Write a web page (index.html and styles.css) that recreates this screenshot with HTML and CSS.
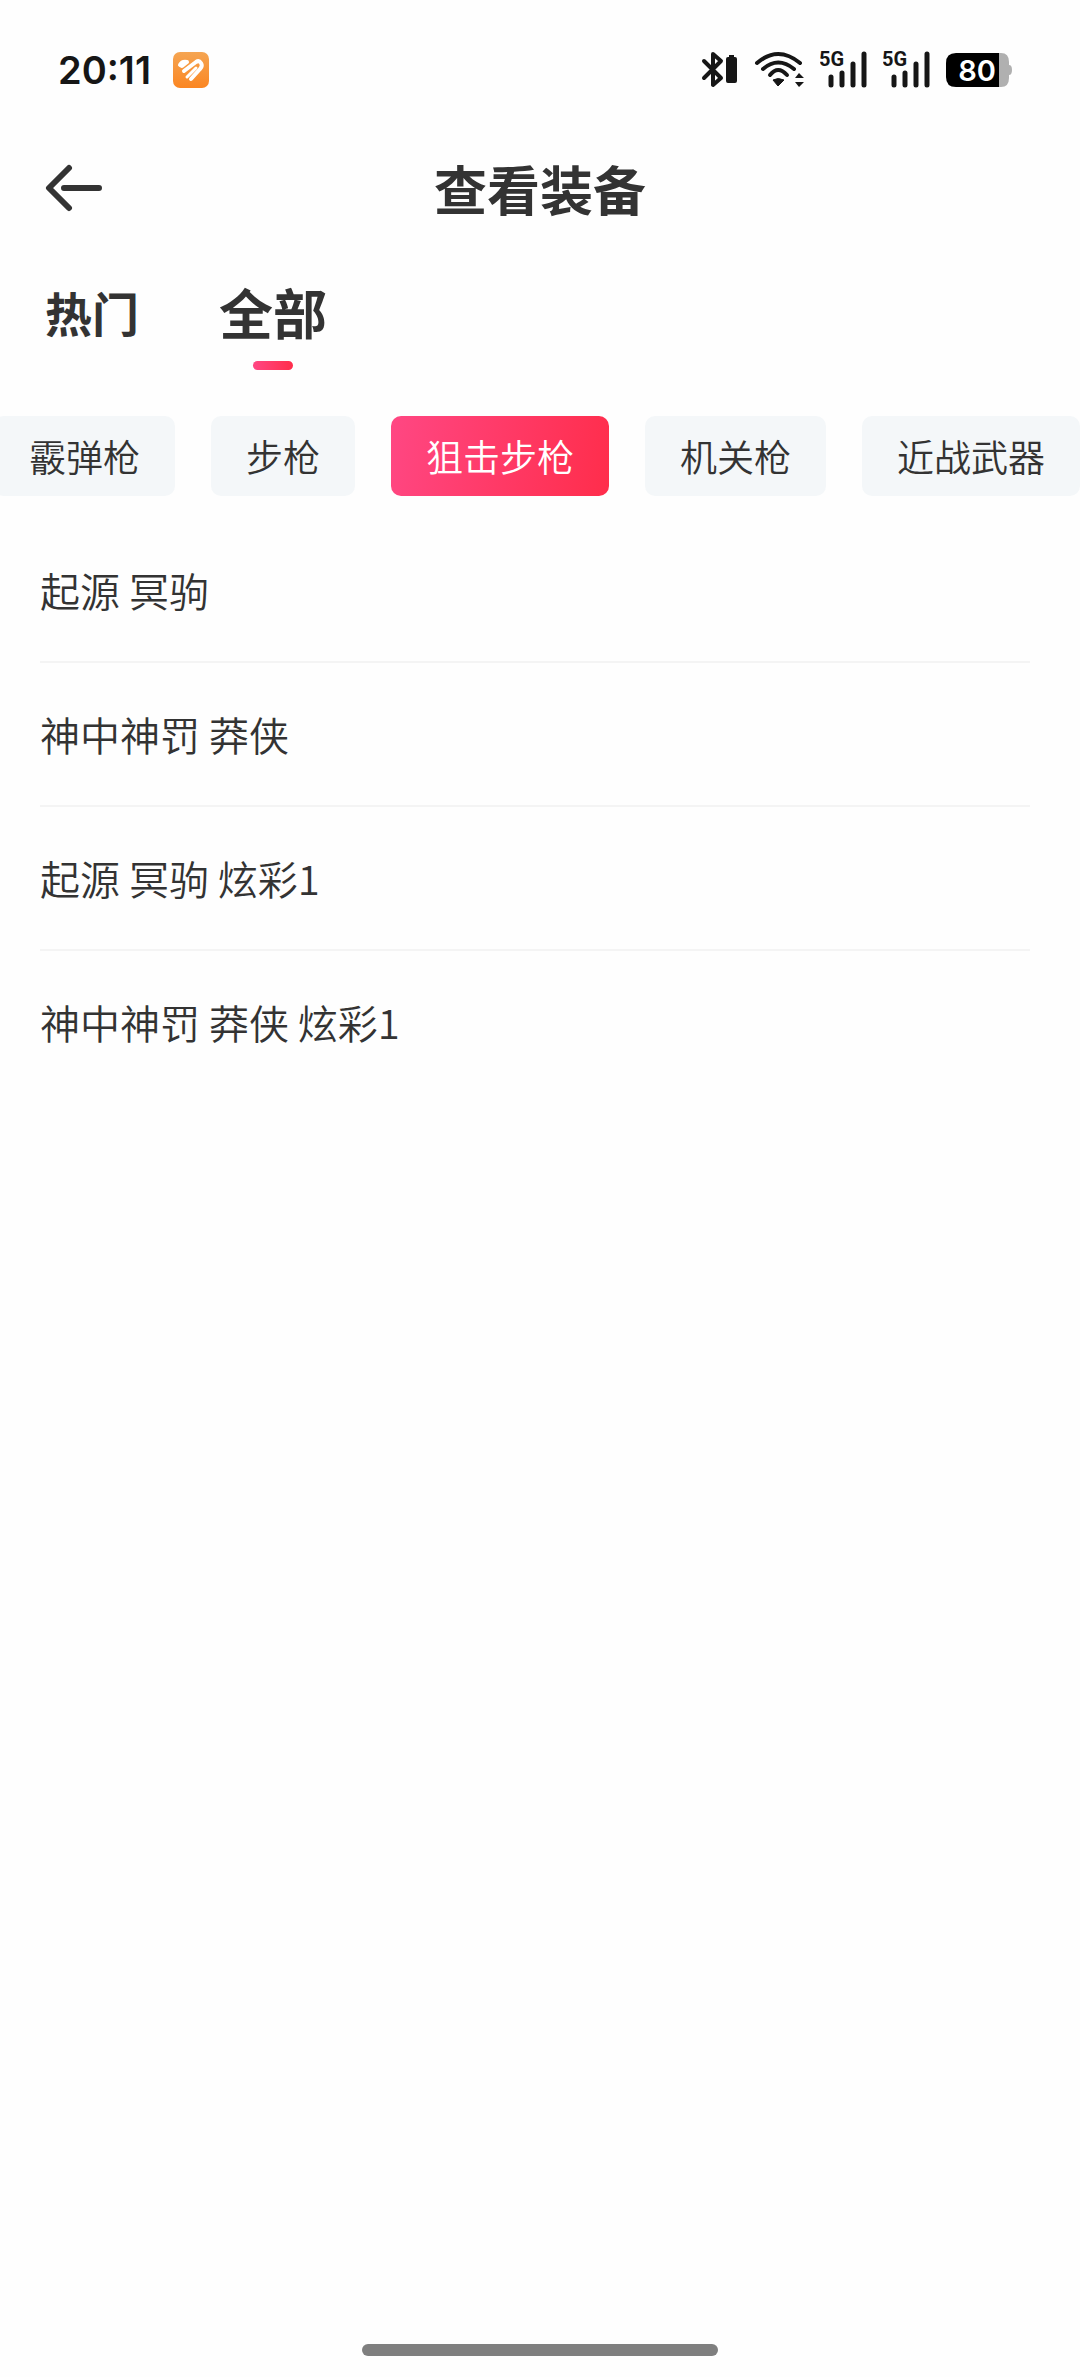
FILE: index.html
```html
<!DOCTYPE html>
<html lang="zh-CN">
<head>
    <meta charset="UTF-8">
    <meta name="viewport" content="width=device-width, initial-scale=1.0">
    <title>查看装备</title>
    <link rel="stylesheet" href="styles.css">
</head>
<body>
    <div class="status-bar">
        <div class="status-left">
            <span class="time">20:11</span>
            <svg class="app-icon" width="36" height="36" viewBox="0 0 36 36" aria-hidden="true">
                <defs>
                    <linearGradient id="orange" x1="0" y1="0" x2="0" y2="1">
                        <stop offset="0" stop-color="#f5a552"/>
                        <stop offset="1" stop-color="#fb8622"/>
                    </linearGradient>
                </defs>
                <rect width="36" height="36" rx="7" fill="url(#orange)"/>
                <g fill="none" stroke="#fff" stroke-linecap="round" stroke-linejoin="round">
                    <path d="M7 13 Q9 9 14 10 L9 14z" stroke-width="4"/>
                    <path d="M11 19 L23 10 Q26 8 28 11 Q30 14 27 17 L18 27" stroke-width="4"/>
                    <path d="M14 25 L23 16" stroke-width="3"/>
                </g>
            </svg>
        </div>
        <div class="status-right">
            <svg width="37" height="38" viewBox="0 0 37 38" aria-hidden="true">
                <path d="M3 10 L20 27 L12 34 V3 L20 10 L3 27" fill="none" stroke="#161616" stroke-width="4" stroke-linejoin="round" stroke-linecap="round"/>
                <path d="M28 4 h5 v2 h1 q2 0 2 2 v22 q0 2 -2 2 h-7 q-2 0 -2 -2 v-22 q0 -2 2 -2 h1z" fill="#161616"/>
            </svg>
            <svg width="50" height="38" viewBox="0 0 50 38" aria-hidden="true">
                <g fill="none" stroke="#161616" stroke-width="4" stroke-linecap="round">
                    <path d="M3 12 Q24 -6 46 12"/>
                    <path d="M9 18 Q24 5 40 18"/>
                    <path d="M16 24 Q24 14 33 24"/>
                </g>
                <path d="M19 29 Q24 26 30 29 L24 35z" fill="#161616" stroke="#161616" stroke-linejoin="round"/>
                <path d="M41 27 L45 22 L50 27z M41 31 H50 L45 36z" fill="#161616"/>
            </svg>
            <svg width="47" height="54" viewBox="0 -8 47 54" role="img" aria-label="5G">
                <text class="net" x="-1" y="15">5G</text>
                <path d="M11 26 V34 M22 22 V34 M33 13 V34 M44 3 V34" stroke="#161616" stroke-width="5" stroke-linecap="round"/>
            </svg>
            <svg width="47" height="54" viewBox="0 -8 47 54" role="img" aria-label="5G">
                <text class="net" x="-1" y="15">5G</text>
                <path d="M11 26 V34 M22 22 V34 M33 13 V34 M44 3 V34" stroke="#161616" stroke-width="5" stroke-linecap="round"/>
            </svg>
            <svg width="66" height="34" viewBox="0 0 66 34" role="img" aria-label="80%">
                <path d="M52 0 h3 q8 0 8 9 v3 q3 0 3 5 t-3 5 v3 q0 9 -8 9 h-3z" fill="#b0b0b0"/>
                <path d="M10 0 H53 V34 H10 Q0 34 0 24 V10 Q0 0 10 0z" fill="#000"/>
                <text class="level" x="31" y="28">80</text>
            </svg>
        </div>
    </div>

    <header class="nav-bar">
        <button type="button" class="back" aria-label="返回">
            <svg width="58" height="48" viewBox="0 0 58 48" aria-hidden="true">
                <path d="M24 4 L4 24 L24 44 M19 24 H54" fill="none" stroke="#333" stroke-width="6" stroke-linecap="round" stroke-linejoin="round"/>
            </svg>
        </button>
        <h1 class="title">查看装备</h1>
    </header>

    <nav class="tabs">
        <button type="button" class="tab">热门</button>
        <button type="button" class="tab active">全部</button>
    </nav>

    <div class="tags">
        <button type="button" class="tag">霰弹枪</button>
        <button type="button" class="tag">步枪</button>
        <button type="button" class="tag selected">狙击步枪</button>
        <button type="button" class="tag">机关枪</button>
        <button type="button" class="tag">近战武器</button>
    </div>

    <ul class="list">
        <li class="item">起源 冥驹</li>
        <li class="item">神中神罚 莽侠</li>
        <li class="item">起源 冥驹 炫彩1</li>
        <li class="item">神中神罚 莽侠 炫彩1</li>
    </ul>

    <div class="home-indicator"></div>
</body>
</html>
```
FILE: styles.css
```css
* {
    box-sizing: border-box;
}
body {
    margin: 0;
    min-height: 100vh;
    display: flex;
    flex-direction: column;
    background-color: #fefefe;
    color: #333;
    font-family: "Noto Sans CJK SC", sans-serif;
    overflow-x: hidden;
}
button {
    padding: 0;
    border: none;
    background: none;
    color: inherit;
    font-family: inherit;
    cursor: pointer;
}
svg {
    display: block;
}

/* Barra de estado */
.status-bar {
    display: flex;
    align-items: center;
    justify-content: space-between;
    height: 140px;
    padding: 0 68px 0 58px;
    font-family: Inter, sans-serif;
    color: #161616;
}
.status-left {
    display: flex;
    align-items: center;
    gap: 22px;
}
.time {
    font-size: 38px;
    font-weight: 600;
}
.status-right {
    display: flex;
    align-items: center;
    gap: 16px;
}
.net {
    font-family: "Liberation Sans Narrow", Roboto, sans-serif;
    font-size: 20px;
    font-weight: bold;
    fill: #161616;
}
.level {
    font-size: 29px;
    font-weight: 600;
    text-anchor: middle;
    fill: #fff;
}

/* Cabecera */
.nav-bar {
    display: grid;
    grid-template-columns: 1fr auto 1fr;
    align-items: center;
    height: 96px;
    padding: 0 45px;
}
.title {
    margin: 0;
    font-size: 53px;
    line-height: 80px;
    font-weight: bold;
}

.tabs {
    display: flex;
    gap: 80px;
    height: 134px;
    margin-bottom: 46px;
    padding: 0 45px;
}
.tab {
    display: flex;
    flex-direction: column;
    align-items: center;
    justify-content: flex-end;
    font-size: 47px;
    line-height: 72px;
    font-weight: bold;
    padding-bottom: 22px;
}
.tab.active {
    padding-bottom: 0;
    font-size: 54px;
}
.tab.active::after {
    content: "";
    width: 40px;
    height: 9px;
    margin-top: 13px;
    border-radius: 5px;
    background: linear-gradient(90deg, #ff4783, #ff2d4b);
}

/* La fila queda desplazada hasta el final */
.tags {
    display: flex;
    justify-content: flex-end;
    gap: 36px;
    overflow: hidden;
}
.tag {
    flex-shrink: 0;
    height: 80px;
    padding: 0 35px;
    border-radius: 10px;
    background-color: #f4f7f9;
    font-size: 37px;
    font-weight: 350;
    white-space: nowrap;
}
.tag.selected {
    background: linear-gradient(100deg, #ff4783, #ff2d4b);
    color: #fff;
}

.list {
    flex: 1;
    margin: 0;
    padding: 23px 50px 0 40px;
    list-style: none;
}
.item {
    height: 144px;
    line-height: 142px;
    font-size: 40px;
    font-weight: 350;
    border-bottom: 2px solid #f4f4f4;
}
.item:last-child {
    border-bottom: none;
}

.home-indicator {
    width: 33%;
    height: 12px;
    margin: 0 auto 21px;
    border-radius: 6px;
    background-color: #7f7f7f;
}
```
